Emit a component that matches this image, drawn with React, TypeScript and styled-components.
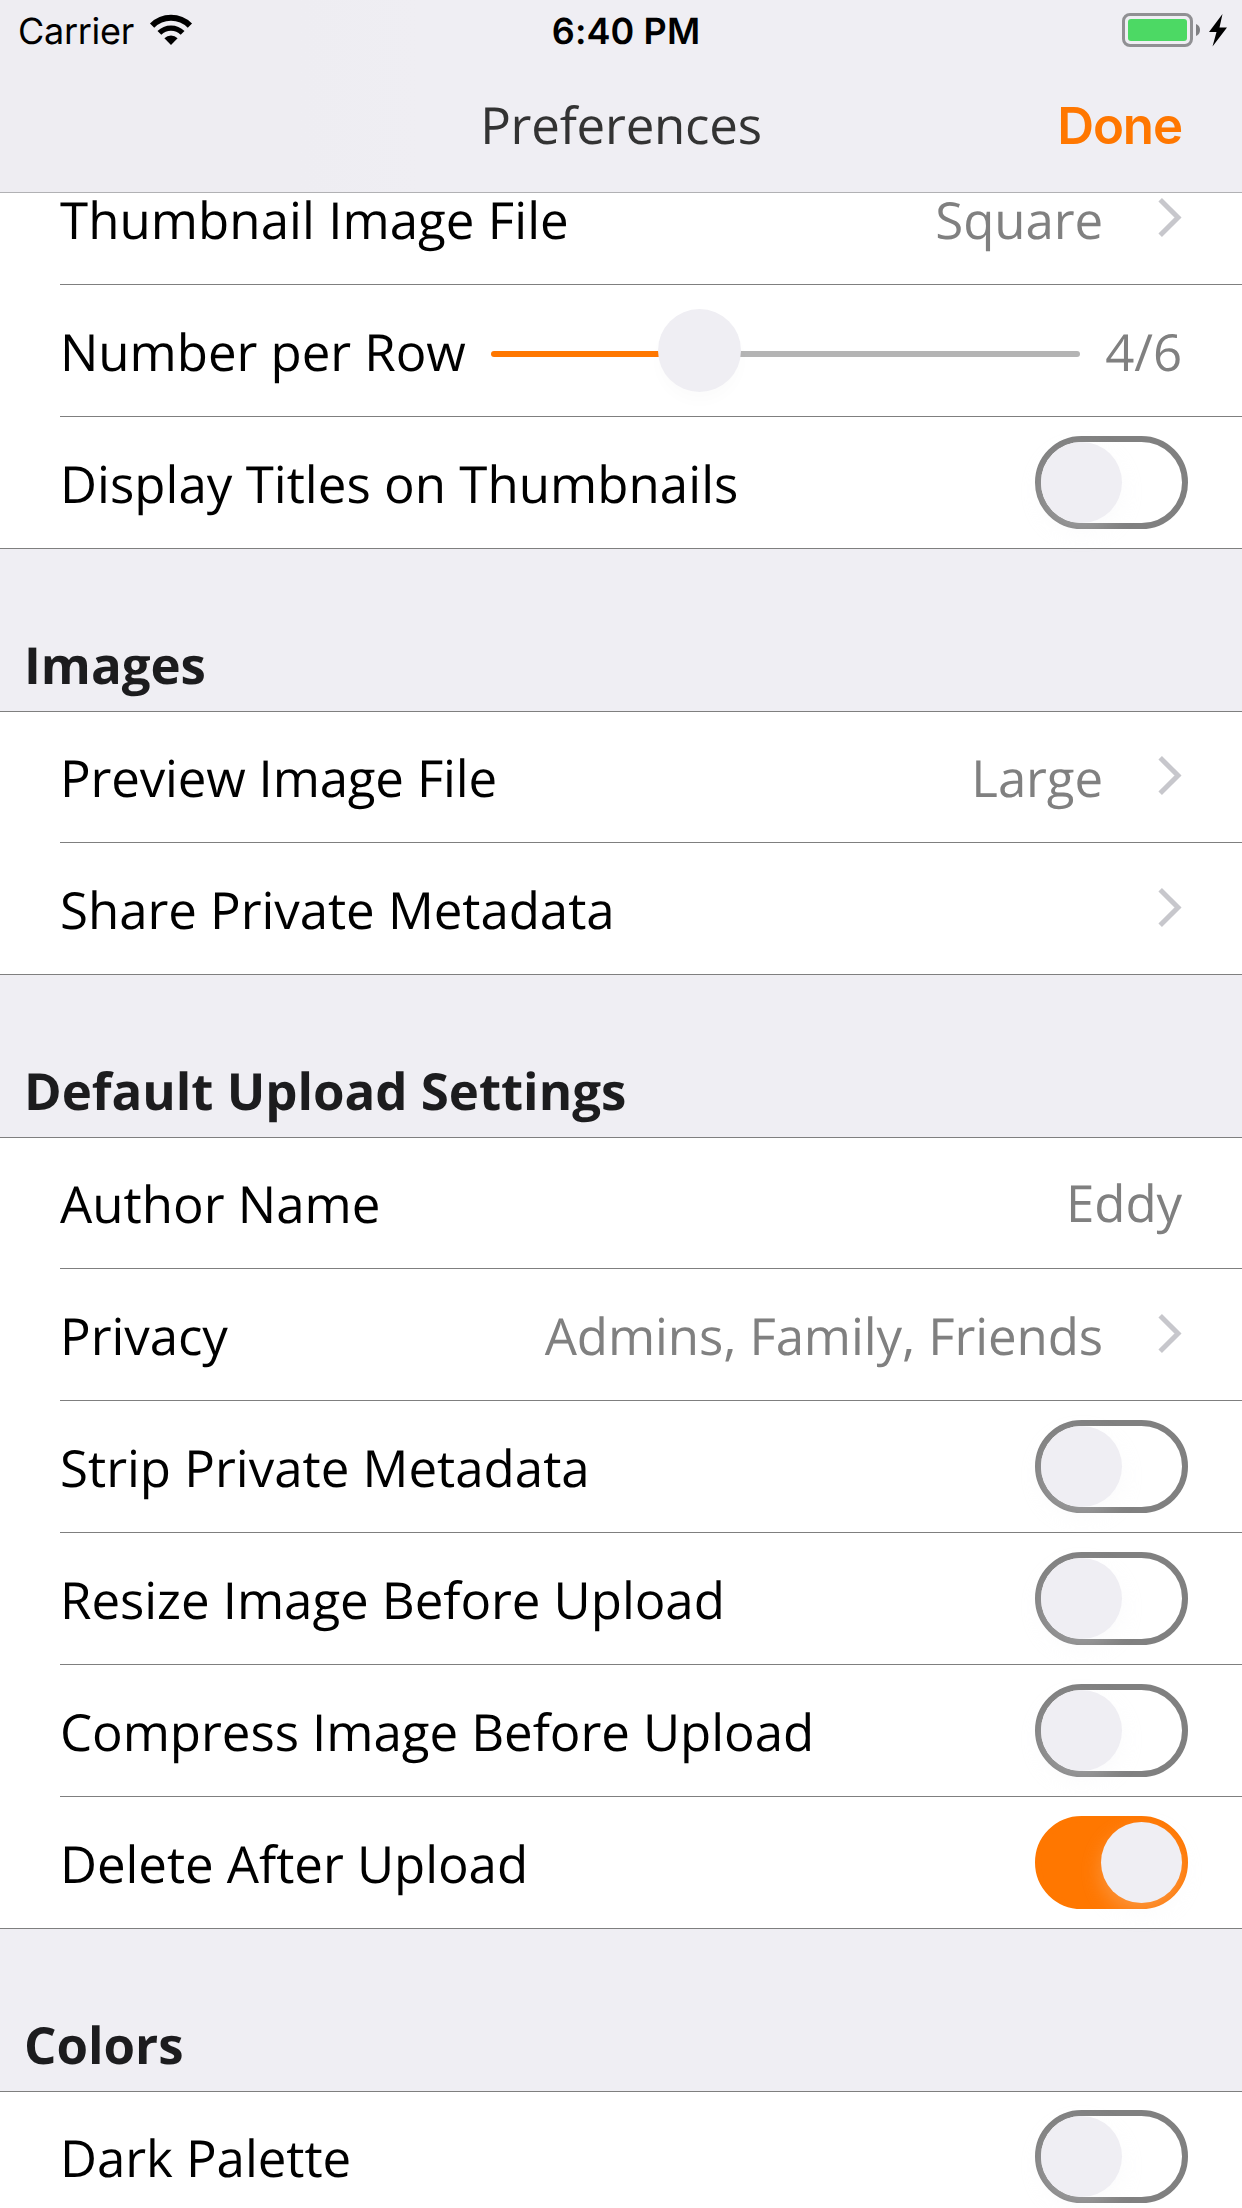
import React from "react";
import styled, { createGlobalStyle, css } from "styled-components";

const colors = {
  panel: "#efeef3",
  orange: "#ff7700",
  gray: "#808080",
  separator: "#7f7f7f",
  heading: "#1c1c1e",
};

const GlobalStyle = createGlobalStyle`
  *, *::before, *::after { box-sizing: border-box; }
  html, body { margin: 0; padding: 0; background: ${colors.panel}; }
`;

const Screen = styled.main`
  width: 1242px;
  height: 2208px;
  display: flex;
  flex-direction: column;
  overflow: hidden;
  background: ${colors.panel};
  font-family: "Open Sans", "Noto Sans", sans-serif;
  font-size: 51px;
  line-height: 70px;
  white-space: nowrap;
  text-rendering: geometricPrecision;
`;

const Header = styled.header`
  flex: none;
  height: 193px;
  border-bottom: 1px solid #b1b1b4;
  background: linear-gradient(90deg, #eeedf2 0, #eeedf2 300px, #efeef3 420px);
`;

const StatusBar = styled.div`
  height: 60px;
  display: grid;
  grid-template-columns: 1fr auto 1fr;
  padding: 0 13px 0 18px;
  font-family: Inter, "Liberation Sans", sans-serif;
  font-size: 36px;
  line-height: 62px;
  color: #000;
`;

const StatusLeft = styled.div`
  display: flex;
  gap: 15px;
  letter-spacing: -0.3px;
`;

const StatusTime = styled.div`
  padding-left: 5px;
  font-weight: 600;
  letter-spacing: 0.1px;
`;

const StatusRight = styled.div`
  display: flex;
  justify-content: flex-end;
`;

const NavBar = styled.div`
  height: 132px;
  display: grid;
  grid-template-columns: 1fr auto 1fr;
  align-items: start;
  padding: 29px 60px 0 60px;
`;

const NavTitle = styled.h1`
  grid-column: 2;
  margin: 0;
  font-size: 51px;
  font-weight: 400;
  letter-spacing: -0.22px;
  color: #333333;
`;

const DoneButton = styled.button`
  justify-self: end;
  padding: 2px 0 0;
  border: 0;
  background: none;
  font: 600 51px/70px Inter, "Liberation Sans", sans-serif;
  letter-spacing: -1.1px;
  color: ${colors.orange};
`;

const List = styled.div`
  flex: 1;
  min-height: 0;
`;

const SectionTitle = styled.h2`
  height: 163px;
  margin: 0;
  padding: 80px 0 0 24px;
  border-bottom: 1px solid ${colors.separator};
  font-size: 51px;
  font-weight: 700;
  letter-spacing: -0.03px;
  color: ${colors.heading};
`;

const Group = styled.section`
  background: #fff;
  border-bottom: 1px solid ${colors.separator};
`;

const Row = styled.div<{ $height: number; $first?: boolean }>`
  height: ${(p) => p.$height}px;
  margin-left: 60px;
  padding-right: 60px;
  display: flex;
  align-items: flex-end;
  ${(p) => !p.$first && css`border-top: 1px solid ${colors.separator};`}
`;

const Label = styled.span<{ $tracking?: number }>`
  flex: none;
  height: 100px;
  letter-spacing: ${(p) => p.$tracking ?? -0.05}px;
  color: #000;
`;

const Value = styled.span<{ $gap?: number; $field?: boolean }>`
  flex: none;
  height: ${(p) => (p.$field ? 101 : 100)}px;
  margin-left: ${(p) => (p.$gap ? `${p.$gap}px` : "auto")};
  letter-spacing: -0.1px;
  color: ${colors.gray};
`;

const ChevronBox = styled.span<{ $alone?: boolean }>`
  flex: none;
  display: flex;
  height: 86px;
  margin-left: ${(p) => (p.$alone ? "auto" : "55px")};
`;

const SwitchTrack = styled.span<{ $on?: boolean }>`
  flex: none;
  display: flex;
  justify-content: ${(p) => (p.$on ? "flex-end" : "flex-start")};
  width: 153px;
  height: 93px;
  margin: 0 -6px 19px auto;
  border: 6px solid ${(p) => (p.$on ? colors.orange : colors.gray)};
  border-radius: 47px;
  background: ${(p) => (p.$on ? colors.orange : "#fff")};
`;

const SwitchKnob = styled.span`
  width: 81px;
  height: 81px;
  border-radius: 50%;
  background: ${colors.panel};
  box-shadow: 0 9px 20px rgba(239, 238, 243, 0.25);
`;

const Slider = styled.span`
  flex: none;
  display: flex;
  align-items: center;
  width: 589px;
  height: 83px;
  margin: 0 0 24px auto;
`;

const SliderBar = styled.span<{ $filled?: boolean }>`
  width: ${(p) => (p.$filled ? "170px" : "auto")};
  flex: ${(p) => (p.$filled ? "none" : "1")};
  height: 6px;
  margin-top: 7px;
  border-radius: ${(p) => (p.$filled ? "3px 0 0 3px" : "0 3px 3px 0")};
  background: ${(p) => (p.$filled ? colors.orange : "#b4b4b4")};
`;

const SliderThumb = styled.span`
  position: relative;
  flex: none;
  width: 83px;
  height: 83px;
  margin: 0 -2px 0 -3px;
  border-radius: 50%;
  background: ${colors.panel};
  box-shadow: 0 10px 14px rgba(0, 0, 0, 0.015);
`;

const WifiIcon = () => (
  <svg width="44" height="60" viewBox="149 0 44 60" fill="none" stroke="#000">
    <path d="M152.1 25.6A26.7 26.7 0 0 1 189.9 25.6" strokeWidth="6" />
    <path d="M159.4 32.9A16.4 16.4 0 0 1 182.6 32.9" strokeWidth="5.4" />
    <path d="M171 45L164.4 38.3A9.3 9.3 0 0 1 177.6 38.3Z" fill="#000" stroke="none" />
  </svg>
);

const BatteryIcon = () => (
  <svg width="108" height="60" viewBox="1121 0 108 60">
    <rect x="1123.5" y="14.5" width="68" height="31" rx="6.5" fill="none" stroke="#909093" strokeWidth="3" />
    <rect x="1128" y="19" width="59" height="22" rx="3" fill="#4cd964" />
    <path d="M1196 24C1198.600 25 1200 27.300 1200 30S1198.600 35 1196 36Z" fill="#808083" />
    <path d="M1222.500 14L1209 32H1216.500L1212.500 46.500L1227 27.500H1219.500Z" fill="#000" />
  </svg>
);

const Chevron = ({ alone }: { alone?: boolean }) => (
  <ChevronBox $alone={alone}>
    <svg width="24" height="39" viewBox="0 0 24 39" fill="none" stroke="#c7c7cc" strokeWidth="5">
      <path d="M2.200 1.800L20 19.500L2.200 37.200" />
    </svg>
  </ChevronBox>
);

const Switch = ({ on }: { on?: boolean }) => (
  <SwitchTrack $on={on} role="switch" aria-checked={!!on}>
    <SwitchKnob />
  </SwitchTrack>
);

type Item = {
  label: string;
  tracking?: number;
  value?: string;
  link?: boolean;
  toggle?: boolean;
  on?: boolean;
  slider?: boolean;
  field?: boolean;
};

const thumbnailItems: Item[] = [
  { label: "Thumbnail Image File", tracking: 0.05, value: "Square", link: true },
  { label: "Number per Row", value: "4/6", slider: true },
  { label: "Display Titles on Thumbnails", tracking: 0.03, toggle: true },
];

const sections: { title: string; items: Item[] }[] = [
  {
    title: "Images",
    items: [
      { label: "Preview Image File", tracking: -0.17, value: "Large", link: true },
      { label: "Share Private Metadata", link: true },
    ],
  },
  {
    title: "Default Upload Settings",
    items: [
      { label: "Author Name", tracking: 0, value: "Eddy", field: true },
      { label: "Privacy", value: "Admins, Family, Friends", link: true },
      { label: "Strip Private Metadata", tracking: 0, toggle: true },
      { label: "Resize Image Before Upload", toggle: true },
      { label: "Compress Image Before Upload", toggle: true },
      { label: "Delete After Upload", toggle: true, on: true },
    ],
  },
  { title: "Colors", items: [{ label: "Dark Palette", toggle: true }] },
];

const PreferenceRow = ({ item, first, height }: { item: Item; first: boolean; height: number }) => (
  <Row $first={first} $height={height}>
    <Label $tracking={item.tracking}>{item.label}</Label>
    {item.slider && (
      <Slider>
        <SliderBar $filled />
        <SliderThumb />
        <SliderBar />
      </Slider>
    )}
    {item.value && (
      <Value $gap={item.slider ? 25 : undefined} $field={item.field}>
        {item.value}
      </Value>
    )}
    {item.link && <Chevron alone={!item.value} />}
    {item.toggle && <Switch on={item.on} />}
  </Row>
);

export default function App() {
  return (
    <>
      <GlobalStyle />
      <Screen>
        <Header>
          <StatusBar>
            <StatusLeft>
              Carrier
              <WifiIcon />
            </StatusLeft>
            <StatusTime>6:40 PM</StatusTime>
            <StatusRight>
              <BatteryIcon />
            </StatusRight>
          </StatusBar>
          <NavBar>
            <NavTitle>Preferences</NavTitle>
            <DoneButton>Done</DoneButton>
          </NavBar>
        </Header>
        <List>
          <Group>
            {thumbnailItems.map((item, i) => (
              <PreferenceRow key={item.label} item={item} first={i === 0} height={i === 0 ? 91 : 132} />
            ))}
          </Group>
          {sections.map((section) => (
            <React.Fragment key={section.title}>
              <SectionTitle>{section.title}</SectionTitle>
              <Group>
                {section.items.map((item, i) => (
                  <PreferenceRow key={item.label} item={item} first={i === 0} height={i === 0 ? 130 : 132} />
                ))}
              </Group>
            </React.Fragment>
          ))}
        </List>
      </Screen>
    </>
  );
}
